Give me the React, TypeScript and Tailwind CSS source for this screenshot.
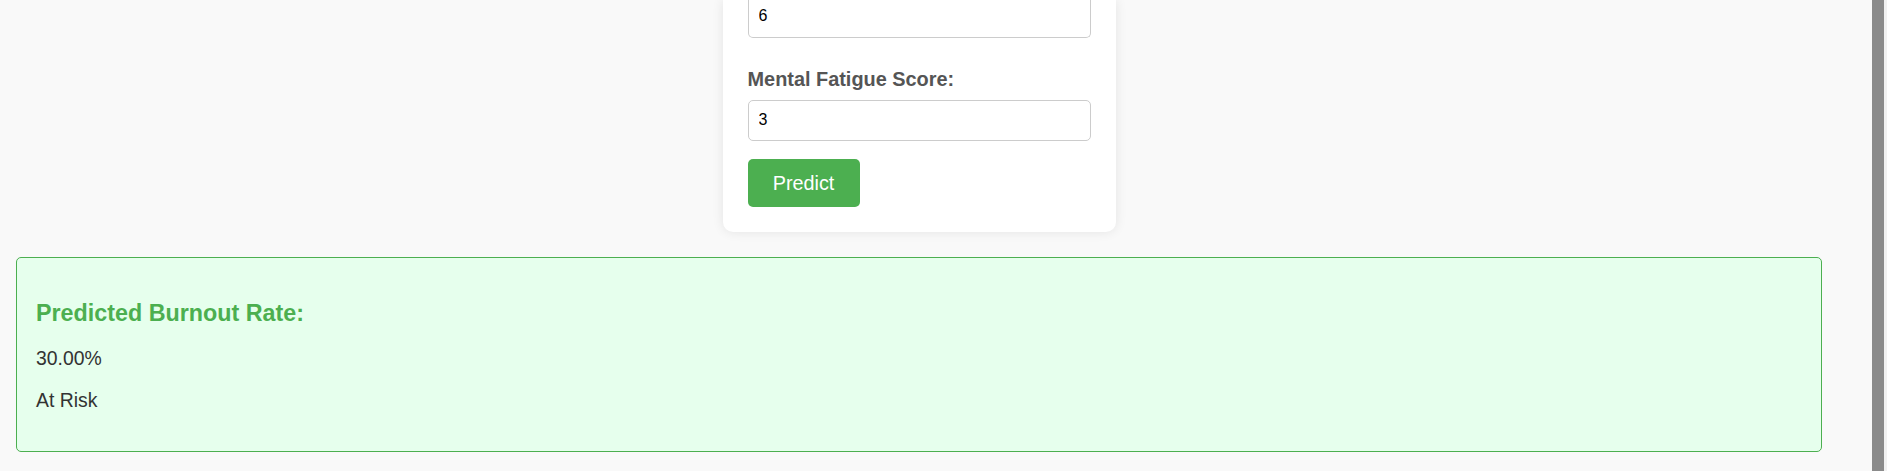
import React from "react";

const font = { fontFamily: '"Liberation Sans", Arial, sans-serif' };

const App = () => {
  return (
    <div
      className="flex w-full h-[471px] overflow-hidden bg-[#f9f9f9]"
      style={font}
    >
      <div className="flex-1">
        <div className="w-[1806px] ml-[16px]">
          {/* form card, scrolled so its top is above the view */}
          <div className="flex justify-center">
            <div className="w-[393px] bg-white rounded-b-[10px] shadow-[0_0_12px_rgba(0,0,0,0.09)] px-[25px] pb-[25px]">
              <input
                type="text"
                defaultValue="6"
                readOnly
                className="block w-full h-[38px] pt-0 pb-[5px] px-[10px] border border-t-0 border-[#ccc] rounded-b-[5px] text-[16px] text-black bg-white outline-none"
              />
              <label className="block mt-[30px] text-[19.9px] leading-[22px] font-bold text-[#555]">
                Mental Fatigue Score:
              </label>
              <input
                type="text"
                defaultValue="3"
                readOnly
                className="block w-full h-[41px] mt-[9.6px] px-[10px] border border-[#ccc] rounded-[5px] text-[16px] text-black bg-white outline-none"
              />
              <button className="block mt-[18.5px] w-[112px] h-[48px] rounded-[5px] bg-[#4caf50] text-white text-[19.8px] leading-[22px]">
                Predict
              </button>
            </div>
          </div>

          <div className="mt-[25px] border border-[#4caf50] rounded-[5px] bg-[#e6ffed] px-[19px] py-[20px]">
            <h3 className="mt-[22.46px] text-[23.3px] leading-[25.8px] font-bold text-[#4caf50]">
              Predicted Burnout Rate:
            </h3>
            <p className="mt-[20.5px] text-[19.4px] leading-[22px] text-[#333]">
              30.00%
            </p>
            <p className="mt-[20.4px] mb-[19.8px] text-[19.4px] leading-[22px] text-[#333]">
              At Risk
            </p>
          </div>
        </div>
      </div>
      <div className="w-[12px] bg-[#8b8b8b]" />
      <div className="w-[3px] bg-[#f1f1f1]" />
    </div>
  );
};

export default App;
